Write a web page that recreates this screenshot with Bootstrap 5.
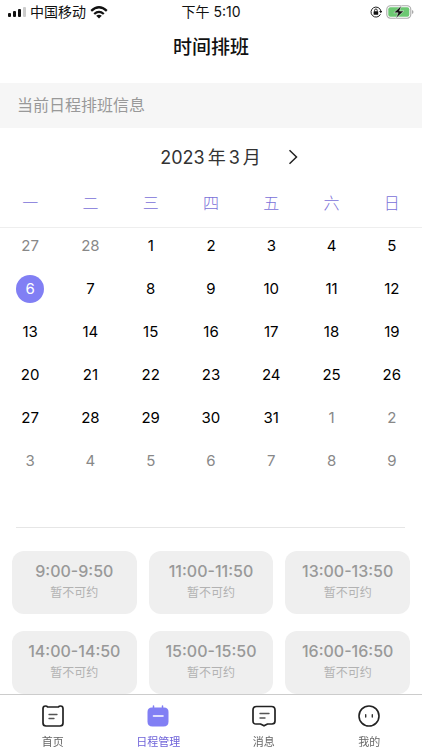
<!DOCTYPE html>
<html lang="zh-CN">
<head>
<meta charset="utf-8">
<meta name="viewport" content="width=device-width, initial-scale=1">
<title>时间排班</title>
<link href="https://cdn.jsdelivr.net/npm/bootstrap@5.3.0/dist/css/bootstrap.min.css" rel="stylesheet">
<style>
:root { --accent: #817ff4; }
body { font-family: Inter, "Noto Sans CJK SC", sans-serif; color: #1c1c1c; background: #fff; }
button { font-family: inherit; }
.status-bar { height: 24px; font-size: 14px; line-height: 24px; color: #111; padding: 0 8px; }
.page-title { font-size: 19px; line-height: 48px; font-weight: 500; color: #111; }
.notice { margin-top: 11px; padding: 0 17px; font-size: 16px; line-height: 45px; color: #999; background: #f6f6f6; }
.month-row { height: 58px; font-size: 18px; padding-left: 39px; gap: 24px; color: #333; }
.month-name { gap: 3px; }
.calendar { table-layout: fixed; width: 100%; border-collapse: separate; border-spacing: 0; }
.calendar th { height: 42px; padding: 0 0 12px; font-size: 16px; line-height: 24px; font-weight: 300; color: #7a70d8; border-bottom: 1px solid #eee; vertical-align: bottom; }
.calendar td { padding: 4px 0 11px; }
.day { display: block; width: 28px; height: 28px; margin: 0 auto; padding: 0; border: 0; border-radius: 50%; background: none; font-size: 15px; line-height: 28px; font-weight: 400; color: #000; text-align: center; }
.day.other { color: #888; }
.day.picked { color: #fff; background: var(--accent); }
.divider { margin: 41px 17px 23px 16px; border-top: 1px solid #e6e6e6; opacity: 1; }
.slots { display: grid; grid-template-columns: repeat(3, 1fr); gap: 17px 12px; padding: 0 12px 70px; }
.slot { height: 63px; padding: 0 0 3px; border: 0; border-radius: 12px; background: #efefef; color: #999; }
.slot-time { display: block; font-size: 16px; line-height: 24px; font-weight: 500; }
.slot-note { display: block; font-size: 12px; line-height: 20px; color: #b2b2b2; }
.tab-bar { height: 56px; background: #fff; border-top: 1px solid #ccc; }
.tab { padding-top: 9px; font-size: 11px; line-height: 18px; color: #666; text-decoration: none; }
.tab svg { display: block; margin: 0 auto 5px; }
.tab.current { color: #6f63d9; }
</style>
<script src="https://cdn.jsdelivr.net/npm/bootstrap@5.3.0/dist/js/bootstrap.bundle.min.js" defer></script>
</head>
<body>
<header>
  <div class="status-bar row g-0 align-items-center">
    <div class="col d-flex align-items-center">
      <svg width="18" height="10" viewBox="0 0 18 10" aria-hidden="true"><g fill="#111"><rect y="6" width="3" height="4" rx="1"/><rect x="5" y="4" width="3" height="6" rx="1"/><rect x="10" y="2" width="3" height="8" rx="1"/></g><rect x="15" width="3" height="10" rx="1" fill="#ccc"/></svg>
      <span class="ms-1 me-1">中国移动</span>
      <svg width="18" height="13" viewBox="0 0 18 13" aria-hidden="true"><g fill="none" stroke="#111" stroke-width="2.3"><path d="M1.2 4.8Q9-2.2 16.8 4.8"/><path d="M4.2 8Q9 3.8 13.8 8"/></g><path d="M6.2 9.8Q9 7.6 11.8 9.8L9 12.6z" fill="#111"/></svg>
    </div>
    <div class="col-auto">下午 5:10</div>
    <div class="col d-flex align-items-center justify-content-end gap-1">
      <svg width="12" height="12" viewBox="0 0 12 12" aria-hidden="true"><path d="M10.5 8.3A5 5 0 1 1 10.9 5" fill="none" stroke="#222" stroke-width="1"/><path d="M9 5h3.4l-1.6 2.3z" fill="#222"/><rect x="3.6" y="5.3" width="4.6" height="3.4" rx=".5" fill="#111"/><path d="M4.600 5.500V4.300a1.300 1.300 0 0 1 2.600 0v1.200" fill="none" stroke="#111" stroke-width=".9"/></svg>
      <svg width="28" height="14" viewBox="0 0 28 14" aria-hidden="true"><rect x=".8" y=".8" width="24" height="12.4" rx="3.6" fill="#fff" stroke="#aaa" stroke-width="1.1"/><rect x="2.300" y="2.300" width="21" height="9.400" rx="2" fill="#6cc872"/><path d="M26 5v4q1.500-.5 1.500-2t-1.500-2z" fill="#aaa"/><path d="M15.500.4L7.800 7.800h4.300l-2.300 5.800 8-7.600h-4.300z" fill="#111" stroke="#fff" stroke-width=".5"/></svg>
    </div>
  </div>
  <h1 class="page-title text-center mb-0">时间排班</h1>
</header>
<main>
  <p class="notice mb-0">当前日程排班信息</p>
  <div class="month-row d-flex align-items-center justify-content-center">
    <div class="month-name d-flex"><span>2023</span><span>年</span><span>3</span><span>月</span></div>
    <button type="button" class="btn p-0 border-0 d-flex" aria-label="下个月"><svg width="16" height="16" viewBox="0 0 16 16"><path d="M4.5 1.3L11.5 8l-7 6.8" fill="none" stroke="#222" stroke-width="1.5"/></svg></button>
  </div>
  <table class="calendar">
    <thead class="text-center"><tr><th scope="col">一</th><th scope="col">二</th><th scope="col">三</th><th scope="col">四</th><th scope="col">五</th><th scope="col">六</th><th scope="col">日</th></tr></thead>
    <tbody>
      <tr><td><button class="day other">27</button></td><td><button class="day other">28</button></td><td><button class="day">1</button></td><td><button class="day">2</button></td><td><button class="day">3</button></td><td><button class="day">4</button></td><td><button class="day">5</button></td></tr>
      <tr><td><button class="day picked" aria-pressed="true">6</button></td><td><button class="day">7</button></td><td><button class="day">8</button></td><td><button class="day">9</button></td><td><button class="day">10</button></td><td><button class="day">11</button></td><td><button class="day">12</button></td></tr>
      <tr><td><button class="day">13</button></td><td><button class="day">14</button></td><td><button class="day">15</button></td><td><button class="day">16</button></td><td><button class="day">17</button></td><td><button class="day">18</button></td><td><button class="day">19</button></td></tr>
      <tr><td><button class="day">20</button></td><td><button class="day">21</button></td><td><button class="day">22</button></td><td><button class="day">23</button></td><td><button class="day">24</button></td><td><button class="day">25</button></td><td><button class="day">26</button></td></tr>
      <tr><td><button class="day">27</button></td><td><button class="day">28</button></td><td><button class="day">29</button></td><td><button class="day">30</button></td><td><button class="day">31</button></td><td><button class="day other">1</button></td><td><button class="day other">2</button></td></tr>
      <tr><td><button class="day other">3</button></td><td><button class="day other">4</button></td><td><button class="day other">5</button></td><td><button class="day other">6</button></td><td><button class="day other">7</button></td><td><button class="day other">8</button></td><td><button class="day other">9</button></td></tr>
    </tbody>
  </table>
  <hr class="divider">
  <div class="slots">
    <button class="slot" disabled><span class="slot-time">9:00-9:50</span><span class="slot-note">暂不可约</span></button>
    <button class="slot" disabled><span class="slot-time">11:00-11:50</span><span class="slot-note">暂不可约</span></button>
    <button class="slot" disabled><span class="slot-time">13:00-13:50</span><span class="slot-note">暂不可约</span></button>
    <button class="slot" disabled><span class="slot-time">14:00-14:50</span><span class="slot-note">暂不可约</span></button>
    <button class="slot" disabled><span class="slot-time">15:00-15:50</span><span class="slot-note">暂不可约</span></button>
    <button class="slot" disabled><span class="slot-time">16:00-16:50</span><span class="slot-note">暂不可约</span></button>
  </div>
</main>
<nav class="tab-bar fixed-bottom row g-0 text-center" aria-label="主导航">
  <a class="tab col" href="#home"><svg width="24" height="24" viewBox="0 0 24 24" fill="none" stroke-linecap="round" stroke-linejoin="round"><path d="M4.500 2C2.800 2 2 2.800 2 4.500V19q0 3 3 3h14q3 0 3-3V4.500C22 2.800 21.200 2 19.500 2Q18 2 17.400 3H6.600Q6 2 4.500 2z" stroke="#222" stroke-width="1.700"/><path d="M8 10.500h8M8 14.500h5" stroke="#555" stroke-width="1.300"/></svg>首页</a>
  <a class="tab col current" href="#schedule" aria-current="page"><svg width="24" height="24" viewBox="0 0 24 24" stroke-linecap="round"><path d="M7.500 2v4M16.500 2v4" stroke="#817ff4" stroke-width="1.500"/><path d="M6 3.500h12q4.500 0 4.500 4.500v9.500q0 5-5 5h-11q-5 0-5-5V8Q1.500 3.500 6 3.500z" fill="#817ff4"/><path d="M7.500 12h9.500" stroke="#fff" stroke-width="1.600"/></svg>日程管理</a>
  <a class="tab col" href="#messages"><svg width="24" height="24" viewBox="0 0 24 24" fill="none" stroke-linecap="round" stroke-linejoin="round"><path d="M4.500 2.500h15q3.500 0 3.500 3.500v11q0 3-3 3h-4.500L12 21.800 8.500 20H4q-3 0-3-3V6q0-3.500 3.500-3.500z" stroke="#222" stroke-width="1.700"/><path d="M8 9.500h9M8 14h5" stroke="#555" stroke-width="1.400"/></svg>消息</a>
  <a class="tab col" href="#mine"><svg width="24" height="24" viewBox="0 0 24 24" fill="none" stroke-linecap="round"><circle cx="12" cy="12" r="10" stroke="#222" stroke-width="1.600"/><path d="M8.700 10.700v2.300M15.300 10.700v2.300" stroke="#333" stroke-width="1.400"/></svg>我的</a>
</nav>
</body>
</html>
